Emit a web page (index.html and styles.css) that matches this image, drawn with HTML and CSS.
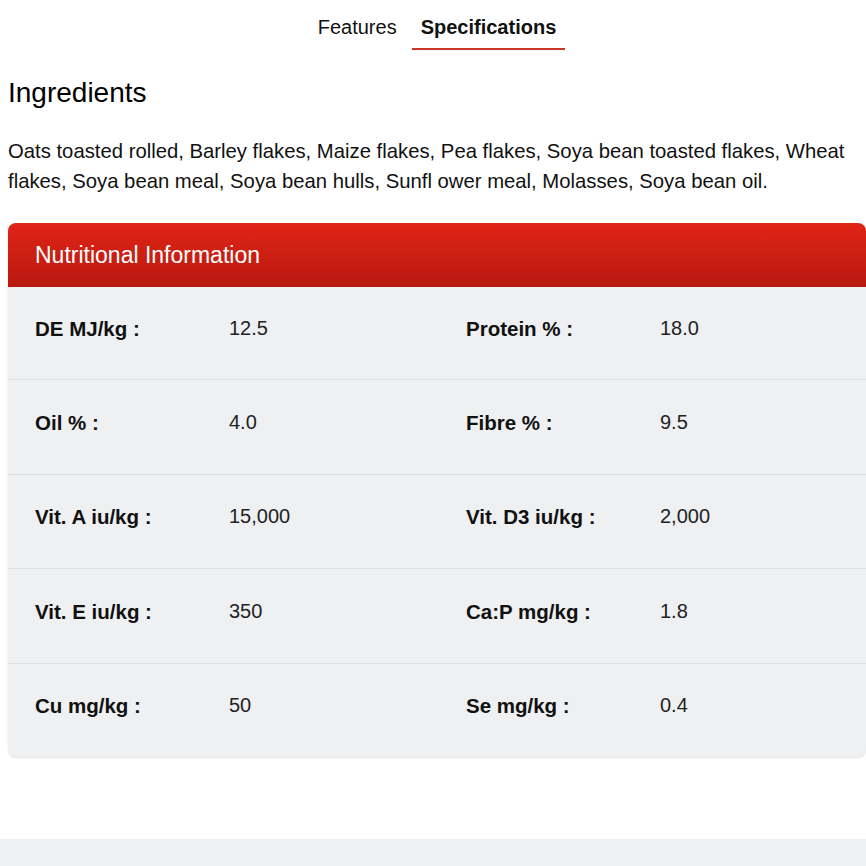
FILE: index.html
```html
<!DOCTYPE html>
<html>
<head>
<meta charset="utf-8">
<link rel="stylesheet" href="styles.css">
</head>
<body>
<div class="page">
  <nav class="tabs">
    <span class="tab">Features</span>
    <span class="tab active">Specifications</span>
  </nav>
  <h2 class="heading">Ingredients</h2>
  <p class="ingredients">Oats toasted rolled, Barley flakes, Maize flakes, Pea flakes, Soya bean toasted flakes, Wheat flakes, Soya bean meal, Soya bean hulls, Sunfl ower meal, Molasses, Soya bean oil.</p>
  <section class="card">
    <div class="card-head">Nutritional Information</div>
    <div class="row first">
      <div class="cell"><span class="label">DE MJ/kg :</span><span class="value">12.5</span></div>
      <div class="cell"><span class="label">Protein % :</span><span class="value">18.0</span></div>
    </div>
    <div class="row">
      <div class="cell"><span class="label">Oil % :</span><span class="value">4.0</span></div>
      <div class="cell"><span class="label">Fibre % :</span><span class="value">9.5</span></div>
    </div>
    <div class="row">
      <div class="cell"><span class="label">Vit. A iu/kg :</span><span class="value">15,000</span></div>
      <div class="cell"><span class="label">Vit. D3 iu/kg :</span><span class="value">2,000</span></div>
    </div>
    <div class="row">
      <div class="cell"><span class="label">Vit. E iu/kg :</span><span class="value">350</span></div>
      <div class="cell"><span class="label">Ca:P mg/kg :</span><span class="value">1.8</span></div>
    </div>
    <div class="row">
      <div class="cell"><span class="label">Cu mg/kg :</span><span class="value">50</span></div>
      <div class="cell"><span class="label">Se mg/kg :</span><span class="value">0.4</span></div>
    </div>
  </section>
</div>
<footer class="footer"></footer>
</body>
</html>
```
FILE: styles.css
```css
* { box-sizing: border-box; }
html, body { margin: 0; padding: 0; background: #fff; }
body {
  font-family: "Liberation Sans", Arial, sans-serif;
  color: #111;
  width: 866px;
  height: 866px;
  overflow: hidden;
  display: flex;
  flex-direction: column;
}
.page {
  padding-left: 8px;
  flex: 1;
}
.tabs {
  display: flex;
  justify-content: center;
  gap: 6px;
  padding-top: 16px;
}
.tab {
  font-size: 20px;
  padding: 0 9px 9px;
  border-bottom: 2px solid transparent;
  color: #111;
}
.tab.active {
  font-weight: bold;
  border-bottom-color: #c8392b;
}
.heading {
  font-size: 28px;
  font-weight: normal;
  margin: 28px 0 0;
  line-height: 30px;
  color: #000;
}
.ingredients {
  font-size: 20.3px;
  line-height: 30px;
  margin: 28px 0 0;
  color: #111;
}
.card {
  margin-top: 27px;
  background: #eef0f2;
  border-radius: 8px;
  overflow: hidden;
  box-shadow: 0 1px 2px rgba(0,0,0,0.12);
}
.card-head {
  height: 64px;
  display: flex;
  align-items: center;
  padding-left: 27px;
  color: #fff;
  font-size: 23px;
  background: linear-gradient(#e02416, #b81a10);
}
.row {
  display: grid;
  grid-template-columns: 431px 1fr;
  height: 94.5px;
  align-items: center;
  border-top: 1px solid #dcdfe2;
  padding-bottom: 8px;
}
.row.first {
  border-top: none;
  height: 92px;
}
.cell {
  display: grid;
  grid-template-columns: 194px 1fr;
  padding-left: 27px;
  font-size: 20px;
}
.label { font-weight: bold; font-size: 20.5px; }
.value { color: #222; }
.footer {
  height: 27px;
  background: #eef0f2;
}
```
